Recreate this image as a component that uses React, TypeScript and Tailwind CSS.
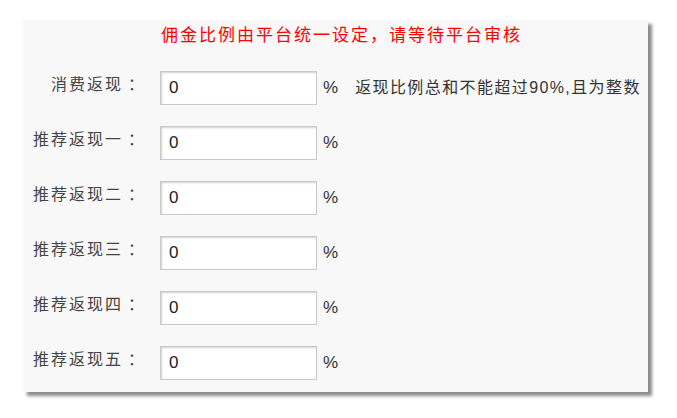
const rows = ['消费返现', '推荐返现一', '推荐返现二', '推荐返现三', '推荐返现四', '推荐返现五'];

const font = { fontFamily: '"Liberation Sans", "Noto Sans CJK SC", sans-serif' };

export default function App() {
  return (
    <div className="w-[677px] h-[418px] bg-white pt-[20px] pl-[23px]" style={font}>
      <div className="w-[625px] h-[372px] bg-[#f8f8f8] shadow-[4px_4px_3px_rgba(0,0,0,0.45)] flex flex-col">
        {/* 标题 */}
        <div className="mt-[5px] h-[22px] leading-[22px] text-center text-[17px] tracking-[2px] text-[#ff0000] pl-[12px]">
          佣金比例由平台统一设定，请等待平台审核
        </div>

        {/* 表单 */}
        <div className="mt-[24px] flex flex-col gap-[21px]">
          {rows.map((label, i) => (
            <div key={label} className="flex items-center h-[34px]">
              <div className="w-[123px] mb-[6px] text-right text-[16px] tracking-[2px] text-[#444] whitespace-nowrap">
                {label}
                <span className="pl-[5px]">：</span>
              </div>
              <input
                defaultValue="0"
                className="ml-[14px] w-[157px] h-[34px] border border-[#c9c9c9] bg-white pl-[8px] text-[17px] text-[#222] shadow-[inset_1px_1px_2px_rgba(0,0,0,0.18)] outline-none"
                style={font}
              />
              <span className="ml-[6px] text-[17px] text-[#333]">%</span>
              {i === 0 && (
                <span className="ml-[17px] text-[16px] tracking-[1.4px] text-[#333] whitespace-nowrap">返现比例总和不能超过90%,且为整数</span>
              )}
            </div>
          ))}
        </div>
      </div>
    </div>
  );
}
